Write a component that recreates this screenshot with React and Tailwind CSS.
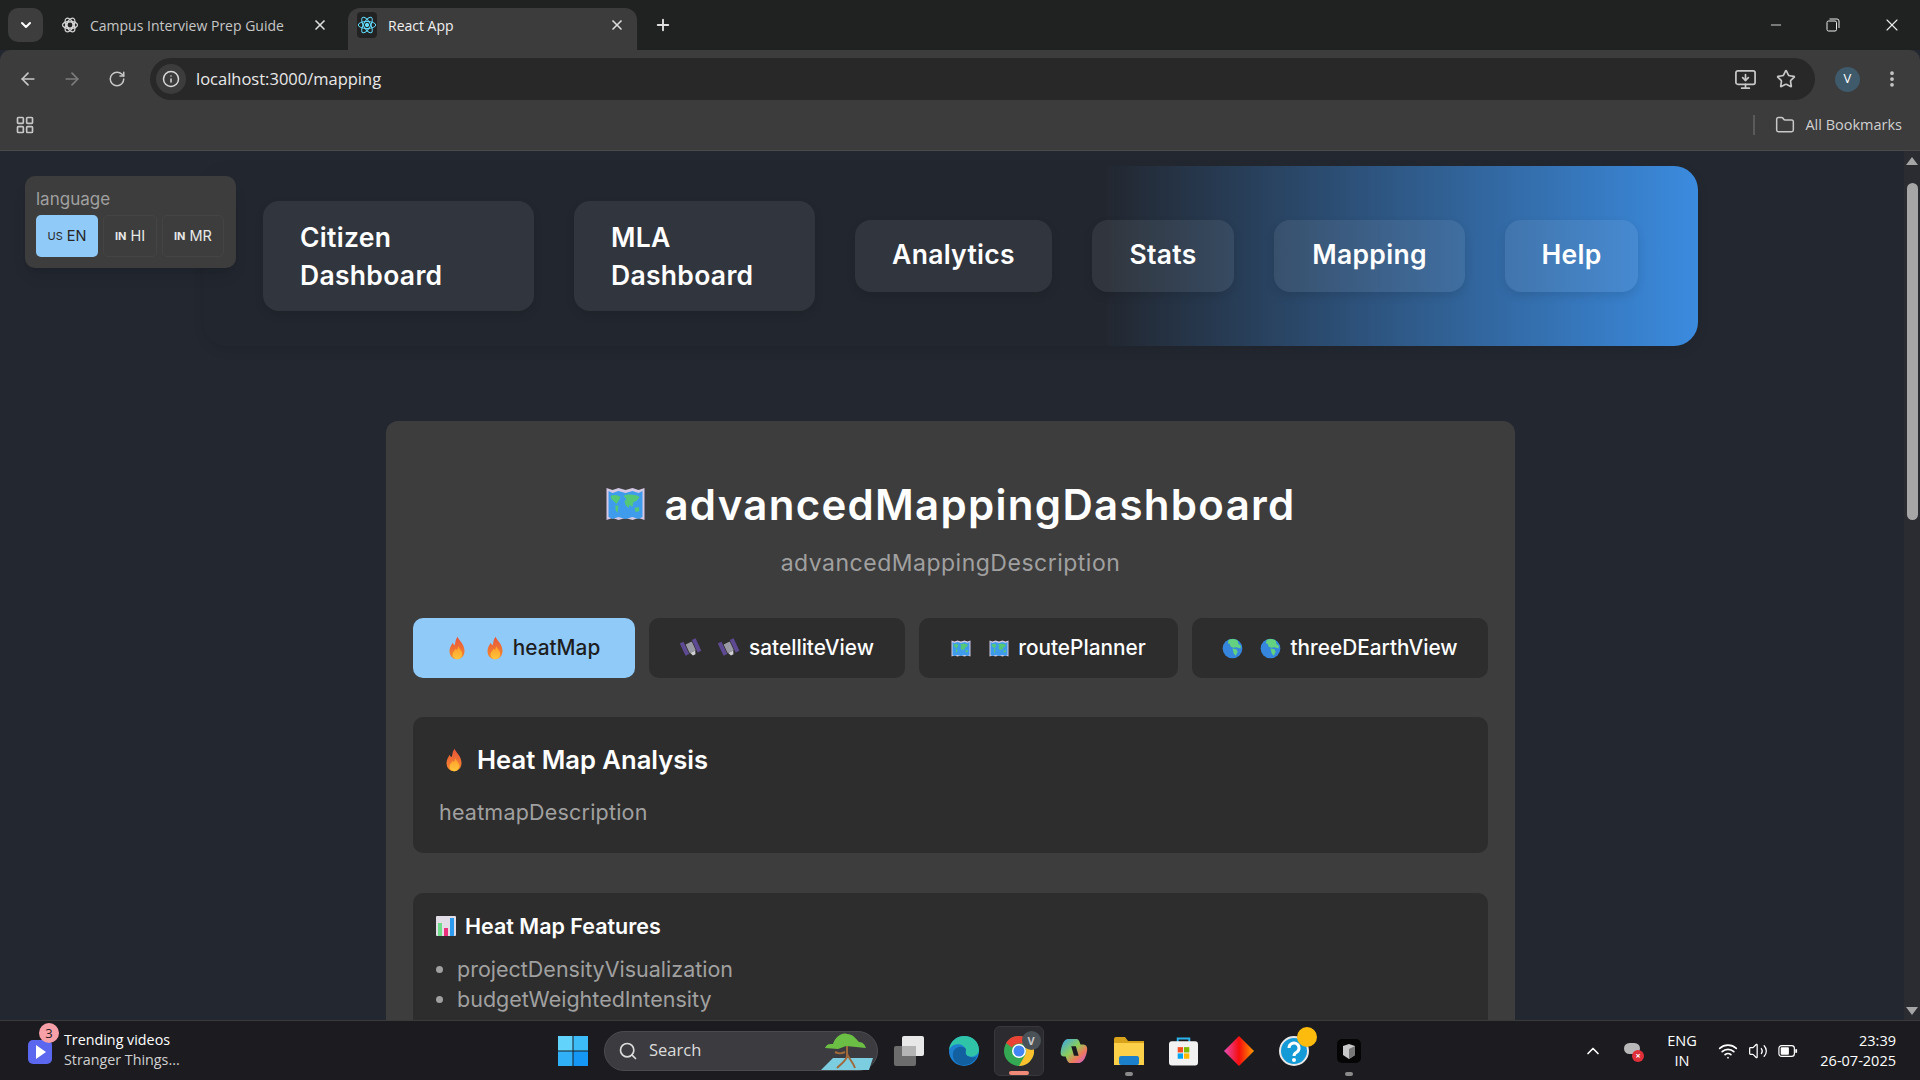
import React from 'react';
import { ArrowLeft, ArrowRight, ChevronDown, ChevronUp, EllipsisVertical, Folder, Info, LayoutGrid, MonitorDown, Minus, Plus, RotateCw, Search, Star, Volume2, Wifi, X } from 'lucide-react';

const poppins = "font-['Inter','Noto_Sans',sans-serif]";
const segoe = "font-['Open_Sans','Noto_Sans',sans-serif]";

const FireEmoji = ({ className }) => (
  <svg viewBox="0 0 24 32" className={className}>
    <defs>
      <linearGradient id="fireOuter" x1="0" y1="0" x2="0" y2="1">
        <stop offset="0" stopColor="#e8553a" />
        <stop offset="1" stopColor="#f58a2c" />
      </linearGradient>
      <linearGradient id="fireInner" x1="0" y1="0" x2="0" y2="1">
        <stop offset="0" stopColor="#ff9a2a" />
        <stop offset="1" stopColor="#ffc53a" />
      </linearGradient>
    </defs>
    <path d="M13 1c1 5 9 9 9 19 0 7-5 11-10 11S2 27 2 20c0-5 3-8 4-11 1 2 2 3 3 3 1-4 1-8 4-11z" fill="url(#fireOuter)" />
    <path d="M14 13c0 4 5 6 5 11 0 4-3 7-7 7s-6-3-6-6c0-4 3-5 4-8 1 1 2 1 2 2 1-2 1-4 2-6z" fill="url(#fireInner)" />
  </svg>
);

const MapEmoji = ({ className }) => (
  <svg viewBox="0 0 40 36" className={className}>
    <path d="M1 2l6 2 6-2 7 2 7-2 6 2 6-2v32l-6-2-6 2-7-2-7 2-6-2-6 2z" fill="#d5c8e4" />
    <path d="M3 5l4 2 6-2 7 2 7-2 6 2 4-2v26l-4 2-6-2-7 2-7-2-6 2-4-2z" fill="#3f9ced" />
    <path d="M5 10c3-2 8-1 10 1l-2 4-2 3-2-2-3-3zM10 19l3 1-1 7-2-3zM18 10c3-2 12-2 16 1l-3 4-3 1-1 5-3-2-1 3-3-3-1-4 2-2z" fill="#55c878" />
    <path d="M29 22l4-1 1 4-4 1z" fill="#55c878" />
  </svg>
);

const SatelliteEmoji = ({ className }) => (
  <svg viewBox="0 0 32 32" className={className}>
    <g transform="rotate(-25 16 16)">
      <rect x="4" y="3" width="6" height="20" fill="#5e4a92" />
      <rect x="22" y="6" width="6" height="20" fill="#5e4a92" />
      <rect x="11" y="8" width="10" height="14" rx="1" fill="#9a9aa4" />
      <path d="M12 22h8l-2 5h-4z" fill="#d0d0d6" />
    </g>
  </svg>
);

const GlobeEmoji = ({ className }) => (
  <svg viewBox="0 0 32 32" className={className}>
    <circle cx="16" cy="16" r="15" fill="#3586dc" />
    <path d="M10 3c4-2 10-2 14 1l1 5 4 3-1 4-6-2-5 1-4-2-1-4-3-1zM16 16l6 1 2 4-3 6-3-3-1-4z" fill="#63d17f" />
  </svg>
);

const ChartEmoji = ({ className }) => (
  <svg viewBox="0 0 20 20" className={className}>
    <rect width="20" height="20" rx="1" fill="#e3dde8" />
    <rect x="2" y="7" width="4" height="13" fill="#6fdc8c" />
    <rect x="8" y="12" width="4" height="8" fill="#ec2f7b" />
    <rect x="14" y="2" width="4" height="18" fill="#2d9bf0" />
  </svg>
);

const TabFavicon = () => (
  <svg viewBox="0 0 24 24" className="w-[18px] h-[18px]" fill="none" stroke="#d6d6d6" strokeWidth="1.6">
    <circle cx="12" cy="12" r="4" />
    <ellipse cx="12" cy="12" rx="10" ry="5" />
    <ellipse cx="12" cy="12" rx="10" ry="5" transform="rotate(60 12 12)" />
    <ellipse cx="12" cy="12" rx="10" ry="5" transform="rotate(120 12 12)" />
  </svg>
);

const ReactFavicon = () => (
  <div className="w-5 h-[26px] bg-[#222] rounded-sm flex items-center justify-center">
    <svg viewBox="0 0 24 24" className="w-5 h-5" fill="none" stroke="#61dafb" strokeWidth="1.2">
      <circle cx="12" cy="12" r="2" fill="#61dafb" />
      <ellipse cx="12" cy="12" rx="10.5" ry="4.2" />
      <ellipse cx="12" cy="12" rx="10.5" ry="4.2" transform="rotate(60 12 12)" />
      <ellipse cx="12" cy="12" rx="10.5" ry="4.2" transform="rotate(120 12 12)" />
    </svg>
  </div>
);

const BrowserChrome = () => (
  <div className={`${segoe} shrink-0`}>
    <div className="h-[50px] bg-[#202222] flex items-end pl-2 text-[14px]">
      <div className="w-[35px] h-[34px] mb-2 bg-[#3d3d3d] rounded-[10px] flex items-center justify-center">
        <ChevronDown className="w-4 h-4 text-white" strokeWidth={3} />
      </div>
      <div className="w-[305px] h-[42px] flex items-center pb-2 pl-[18px] pr-[20px] text-[#c6c6c6]">
        <TabFavicon />
        <span className="ml-[11px] flex-1 truncate">Campus Interview Prep Guide</span>
        <X className="w-4 h-4 text-[#dddddd]" strokeWidth={2.5} />
      </div>
      <div className="w-[289px] h-[42px] bg-[#3c3c3c] rounded-t-[12px] flex items-center pb-2 pl-[9px] pr-[12px] text-[#f0f0f0]">
        <ReactFavicon />
        <span className="ml-[11px] flex-1">React App</span>
        <X className="w-4 h-4 text-[#dddddd]" strokeWidth={2.5} />
      </div>
      <Plus className="w-[18px] h-[18px] text-[#e0e0e0] ml-[17px] mb-[16px]" strokeWidth={2.5} />
      <div className="ml-auto h-full flex items-center pr-[18px] text-[#ececec] gap-[42px]">
        <Minus className="w-[16px] h-[16px]" strokeWidth={1.3} />
        <svg viewBox="0 0 14 14" className="w-[14px] h-[14px]" fill="none" stroke="currentColor">
          <rect x="1" y="3" width="9.5" height="10" rx="1.5" />
          <path d="M3.5 1h7.5a2 2 0 0 1 2 2v7" />
        </svg>
        <X className="w-[20px] h-[20px]" strokeWidth={1.3} />
      </div>
    </div>
    <div className="h-[58px] bg-[#3c3c3c] rounded-t-[10px] flex items-center pl-[18px] text-[#c8c8c8]">
      <ArrowLeft className="w-5 h-5 shrink-0" strokeWidth={2} />
      <ArrowRight className="w-5 h-5 shrink-0 ml-[24px] text-[#7c7c7c]" strokeWidth={2} />
      <RotateCw className="w-[18px] h-[18px] shrink-0 ml-[26px]" strokeWidth={2} />
      <div className="ml-[24px] w-[1665px] shrink-0 h-[42px] bg-[#282828] rounded-full flex items-center pl-[6px] pr-[19px]">
        <div className="w-[30px] h-[30px] rounded-full bg-[#3c3c3c] flex items-center justify-center">
          <Info className="w-[18px] h-[18px] text-[#d8d8d8]" strokeWidth={2} />
        </div>
        <span className="ml-[10px] text-[16.5px] text-[#e8e8e8]">localhost:3000/mapping</span>
        <MonitorDown className="w-[23px] h-[23px] ml-auto" strokeWidth={1.8} />
        <Star className="w-[20px] h-[20px] ml-[19px]" strokeWidth={2} />
      </div>
      <div className="ml-[20px] w-[25px] h-[25px] shrink-0 rounded-full bg-[#3f5a6b] flex items-center justify-center text-[13px] text-white">V</div>
      <EllipsisVertical className="w-5 h-5 shrink-0 ml-[22px]" strokeWidth={2.5} />
    </div>
    <div className="h-[43px] bg-[#3c3c3c] border-b border-[#4a4a4a] flex items-center pb-2 pl-[15px] pr-[18px] text-[#c8c8c8]">
      <LayoutGrid className="w-5 h-5" strokeWidth={2} />
      <div className="ml-auto w-[2px] h-5 bg-[#5a5a5a]" />
      <Folder className="w-[20px] h-[20px] ml-[20px]" strokeWidth={1.8} />
      <span className="ml-[10px] text-[14.5px] text-[#d0d0d0]">All Bookmarks</span>
    </div>
  </div>
);

const LanguageSwitch = () => (
  <div className="absolute left-[25px] top-[25px] w-[211px] h-[92px] bg-[#3d3d3d] rounded-[10px] shadow-lg px-[11px] pt-[11px]">
    <div className="text-[17px] leading-[24px] text-[#a0a0a0]">language</div>
    <div className="flex gap-[5px] mt-[4px] text-[14.5px]">
      <div className="w-[62px] h-[42px] bg-[#90caf9] text-[#262626] rounded-[5px] flex items-center justify-center gap-1">
        <span className="text-[11px]">US</span>EN
      </div>
      <div className="w-[54px] h-[42px] text-[#e8e8e8] rounded-[5px] border border-[#444] flex items-center justify-center gap-1">
        <span className="text-[11px] font-bold">IN</span>HI
      </div>
      <div className="w-[62px] h-[42px] text-[#e8e8e8] rounded-[5px] border border-[#444] flex items-center justify-center gap-1">
        <span className="text-[11px] font-bold">IN</span>MR
      </div>
    </div>
  </div>
);

const navItems = [
  { label: 'Analytics', w: 'w-[197px]' },
  { label: 'Stats', w: 'w-[142px]' },
  { label: 'Mapping', w: 'w-[191px]' },
  { label: 'Help', w: 'w-[133px]' },
];

const NavBar = () => (
  <div className="ml-[204px] w-[1494px] h-[180px] rounded-[24px] bg-[linear-gradient(90deg,#22262e_0%,#22262e_60%,#3b8bdf_100%)] shadow-[0_4px_12px_rgba(0,0,0,0.1)] flex items-center gap-[40px] px-[59px] text-[26.5px] tracking-[0.3px] font-semibold text-white">
    <div className="w-[271px] h-[110px] rounded-[16px] bg-white/[0.07] shadow-[0_4px_10px_rgba(0,0,0,0.1)] flex items-center px-[37px] leading-[38px]">
      <span>Citizen<br />Dashboard</span>
    </div>
    <div className="w-[241px] h-[110px] rounded-[16px] bg-white/[0.07] shadow-[0_4px_10px_rgba(0,0,0,0.1)] flex items-center px-[37px] leading-[38px]">
      <span>MLA<br />Dashboard</span>
    </div>
    {navItems.map((item) => (
      <div key={item.label} className={`${item.w} h-[72px] pb-[2px] rounded-[16px] bg-white/[0.07] shadow-[0_4px_10px_rgba(0,0,0,0.1)] flex items-center justify-center`}>
        {item.label}
      </div>
    ))}
  </div>
);

const tabs = [
  { label: 'heatMap', Icon: FireEmoji, icon: 'w-[18px] h-[24px]', gap: 'gap-[20px]', w: 'w-[222px]', active: true },
  { label: 'satelliteView', Icon: SatelliteEmoji, icon: 'w-[22px] h-[22px]', gap: 'gap-[16px]', w: 'w-[256px]' },
  { label: 'routePlanner', Icon: MapEmoji, icon: 'w-[20px] h-[19px]', gap: 'gap-[18px]', w: 'w-[259px]' },
  { label: 'threeDEarthView', Icon: GlobeEmoji, icon: 'w-[21px] h-[21px]', gap: 'gap-[17px]', w: 'w-[296px]' },
];

const MainCard = () => (
  <div className="ml-[386px] w-[1129px] mt-[75px] bg-[#3d3d3d] rounded-t-[12px] px-[27px] pt-[53px] pb-10">
    <h1 className="flex items-center justify-center gap-[18px] h-[60px] text-[42px] font-semibold text-white tracking-[1.3px]">
      <MapEmoji className="w-[41px] h-[36px]" />
      advancedMappingDashboard
    </h1>
    <p className="mt-[12px] h-[34px] text-center text-[23px] tracking-[0.5px] leading-[34px] text-[#a0a0a0]">advancedMappingDescription</p>
    <div className="flex gap-[14px] mt-[38px]">
      {tabs.map(({ label, Icon, icon, gap, w, active }) => (
        <div
          key={label}
          className={`${w} h-[60px] rounded-[10px] flex items-center justify-center text-[20.8px] font-medium ${
            active ? 'bg-[#90caf9] text-[#1e1e1e]' : 'bg-[#2d2d2d] text-white'
          }`}
        >
          <span className={`flex items-center ${gap}`}>
            <Icon className={icon} />
            <span className="flex items-center gap-[9px]">
              <Icon className={icon} />
              {label}
            </span>
          </span>
        </div>
      ))}
    </div>
    <div className="mt-[39px] h-[136px] bg-[#2d2d2d] rounded-[10px] pl-[26px] pt-[27px]">
      <h2 className="flex items-center pl-[6px] gap-[14px] text-[25.6px] leading-[32px] font-semibold text-white">
        <FireEmoji className="w-[18px] h-[24px]" />
        Heat Map Analysis
      </h2>
      <p className="mt-[20px] text-[21.5px] tracking-[0.2px] leading-[32px] text-[#a0a0a0]">heatmapDescription</p>
    </div>
    <div className="mt-[40px] bg-[#2d2d2d] rounded-[10px] pl-[23px] pt-[20px] pb-10">
      <h3 className="flex items-center gap-[9px] text-[21.5px] leading-[26px] font-semibold text-white">
        <ChartEmoji className="w-[20px] h-[20px]" />
        Heat Map Features
      </h3>
      <ul className="mt-[15px] pl-[21px] list-disc text-[21.5px] leading-[30px] text-[#a0a0a0]">
        <li>projectDensityVisualization</li>
        <li>budgetWeightedIntensity</li>
      </ul>
    </div>
  </div>
);

const Scrollbar = () => (
  <div className="w-4 shrink-0 bg-[#2a2c31] flex flex-col items-center pt-[6px]">
    <div className="w-0 h-0 border-x-[6px] border-x-transparent border-b-[8px] border-b-[#a6a6a6]" />
    <div className="w-[11px] h-[337px] mt-[18px] rounded-full bg-[#a6a6a6]" />
    <div className="w-0 h-0 mt-auto mb-[5px] border-x-[6px] border-x-transparent border-t-[8px] border-t-[#a6a6a6]" />
  </div>
);

const TaskIcon = ({ children, active, dot }) => (
  <div className={`relative w-[50px] h-[50px] mx-[2.5px] rounded-[6px] flex items-center justify-center ${active ? 'bg-[#2b2b30] border border-[#37373c]' : ''}`}>
    {children}
    {dot && <div className={`absolute bottom-0 h-1 rounded-full ${active ? 'w-5 bg-[#f08a78]' : 'w-2 bg-[#8a8a8a]'}`} />}
  </div>
);

const Taskbar = () => (
  <div className={`${segoe} shrink-0 h-[60px] bg-[#1c1c20] border-t border-[#3a3a3a] flex items-center text-white`}>
    <div className="relative w-[554px] shrink-0 pl-[64px] pb-[2px] text-[14.3px] leading-[20px]">
      <svg viewBox="0 0 24 24" className="absolute left-[28px] top-[10px] w-[24px] h-[24px]">
        <rect x="0" y="0" width="24" height="24" rx="5" fill="#5a67ee" />
        <path d="M8 5l10 7-10 7z" fill="#fff" />
      </svg>
      <div className="absolute left-[39px] top-[-7px] w-5 h-5 rounded-full bg-[#f8a0a8] text-[#222] text-[13px] leading-5 text-center">3</div>
      <div>Trending videos</div>
      <div className="text-[#d0d0d0]">Stranger Things...</div>
    </div>
    <svg viewBox="0 0 30 30" className="w-[30px] h-[30px] ml-[4px]">
      <rect x="0" y="0" width="14.5" height="14.5" fill="#62d4fb" />
      <rect x="15.5" y="0" width="14.5" height="14.5" fill="#3cbdf8" />
      <rect x="0" y="15.5" width="14.5" height="14.5" fill="#2fb0f7" />
      <rect x="15.5" y="15.5" width="14.5" height="14.5" fill="#1597f5" />
    </svg>
    <div className="relative ml-[16px] w-[274px] h-[40px] rounded-full bg-[#3c3c40] border border-[#4c4c50] flex items-center pl-[13px] text-[16.5px] text-[#dcdcdc]">
      <Search className="w-[20px] h-[20px]" strokeWidth={2} />
      <span className="ml-[11px]">Search</span>
      <svg viewBox="0 0 56 40" className="absolute right-[4px] top-0 w-[56px] h-[40px]">
        <path d="M4 38l12-12h40l-4 12z" fill="#7ccde0" />
        <path d="M30 14v10c0 4-6 8-10 12M30 22c2 5 6 8 8 14M28 20c-4 2-6 2-10 0" stroke="#a06a3c" strokeWidth="2" fill="none" />
        <path d="M8 16c2-5 6-4 8-4 2-6 8-12 14-10 6 0 8 4 12 8 4 0 6 3 7 6l-10-1-10-1-8 3z" fill="#6cbf45" />
      </svg>
    </div>
    <div className="ml-[3px] flex items-center">
      <TaskIcon>
        <svg viewBox="0 0 30 30" className="w-[30px] h-[30px]">
          <rect x="0" y="10" width="22" height="20" rx="2" fill="#6c6c6c" />
          <rect x="8" y="0" width="22" height="20" rx="2" fill="#e8e8e8" />
          <rect x="8" y="10" width="14" height="10" fill="#b4b4b4" />
        </svg>
      </TaskIcon>
      <TaskIcon>
        <svg viewBox="0 0 30 30" className="w-[30px] h-[30px]">
          <circle cx="15" cy="15" r="15" fill="#1c7fd0" />
          <path d="M0 14C1 5 8 0 15 0c9 0 15 6 15 14 0 5-6 8-11 6-3-1-3-4-2-6C15 7 4 6 0 14z" fill="#2fc4a8" />
          <path d="M17 14c-1 3 0 6 4 7 3 1 6 0 7-1-3 7-10 10-16 9C6 27 3 22 4 17c1-5 6-7 9-6 2 0 4 1 4 3z" fill="#12609f" />
        </svg>
      </TaskIcon>
      <TaskIcon active dot>
        <svg viewBox="0 0 30 30" className="w-[30px] h-[30px]">
          <circle cx="15" cy="15" r="15" fill="#35a853" />
          <path d="M15 0a15 15 0 0 1 13 7.5H15a8 8 0 0 0-7 4L2 7A15 15 0 0 1 15 0z" fill="#ea4335" />
          <path d="M28 7.5A15 15 0 0 1 15 30l6.5-11.5A8 8 0 0 0 21 11z" fill="#fbc02d" />
          <circle cx="15" cy="15" r="7" fill="#fff" />
          <circle cx="15" cy="15" r="5.5" fill="#4285f4" />
        </svg>
        <div className="absolute right-[2px] top-[4px] w-[19px] h-[19px] rounded-full bg-[#4a5258] text-[#c8c8c8] text-[11px] leading-[19px] text-center font-bold">V</div>
      </TaskIcon>
      <TaskIcon>
        <svg viewBox="0 0 30 28" className="w-[28px] h-[26px]">
          <defs>
            <linearGradient id="copilot" x1="0" y1="0" x2="1" y2="1">
              <stop offset="0" stopColor="#35a6f1" />
              <stop offset="0.45" stopColor="#8ccf5a" />
              <stop offset="0.7" stopColor="#f07a5a" />
              <stop offset="1" stopColor="#c45ae8" />
            </linearGradient>
          </defs>
          <path d="M8 1h10c2 0 3 3 4 6h3c3 0 5 3 4 7-1 6-3 11-8 13H10c-2-1-3-4-4-7H4c-3 0-4-3-3-7C2 7 4 2 8 1z" fill="url(#copilot)" />
          <path d="M12 9h5l3 10h-5z" fill="#1c1c20" />
        </svg>
      </TaskIcon>
      <TaskIcon dot>
        <svg viewBox="0 0 30 28" className="w-[30px] h-[28px]">
          <path d="M0 2a2 2 0 0 1 2-2h9l3 4h16v24H0z" fill="#d9a21b" />
          <rect x="0" y="6" width="30" height="22" fill="#fdd04a" />
          <rect x="5" y="19" width="20" height="9" rx="2" fill="#1b7fc9" />
        </svg>
      </TaskIcon>
      <TaskIcon>
        <svg viewBox="0 0 30 30" className="w-[29px] h-[30px]">
          <path d="M9 6V2h12v4" fill="none" stroke="#2cb3ec" strokeWidth="2" />
          <rect x="0" y="5" width="30" height="25" rx="3" fill="#f2f2f2" />
          <rect x="9" y="11" width="5.5" height="5.5" fill="#f25022" />
          <rect x="15.5" y="11" width="5.5" height="5.5" fill="#7fba00" />
          <rect x="9" y="17.5" width="5.5" height="5.5" fill="#00a4ef" />
          <rect x="15.5" y="17.5" width="5.5" height="5.5" fill="#ffb900" />
        </svg>
      </TaskIcon>
      <TaskIcon>
        <svg viewBox="0 0 30 30" className="w-[30px] h-[30px]">
          <defs>
            <linearGradient id="diamond" x1="0" y1="0" x2="1" y2="0">
              <stop offset="0" stopColor="#e84db8" />
              <stop offset="0.5" stopColor="#f60d0d" />
              <stop offset="1" stopColor="#ff9a00" />
            </linearGradient>
          </defs>
          <path d="M15 0l15 15-15 15L0 15z" fill="url(#diamond)" />
        </svg>
      </TaskIcon>
      <TaskIcon>
        <svg viewBox="0 0 30 30" className="w-[30px] h-[30px]">
          <circle cx="15" cy="15" r="14" fill="#149bd7" stroke="#e8e8e8" strokeWidth="2" />
          <path d="M10 12a5 5 0 1 1 8 4c-2 1-3 2-3 4" fill="none" stroke="#fff" strokeWidth="3" />
          <circle cx="15" cy="24" r="2" fill="#fff" />
        </svg>
        <div className="absolute right-[2px] top-[1px] w-5 h-5 rounded-full bg-[#fdbb0e]" />
      </TaskIcon>
      <TaskIcon dot>
        <svg viewBox="0 0 24 24" className="w-[24px] h-[24px]">
          <rect width="24" height="24" rx="5" fill="#050505" />
          <path d="M6 7l6-2 6 2v9l-6 4-6-4z" fill="#c8c8c8" />
          <path d="M12 10l6-3v9l-6 4z" fill="#777" />
        </svg>
      </TaskIcon>
    </div>
    <ChevronUp className="w-5 h-5 ml-[207px]" strokeWidth={2} />
    <div className="relative ml-[21px] w-5 h-5">
      <div className="absolute left-0 top-[2px] w-[16px] h-[11px] rounded-full bg-[#b8b8b8]" />
      <div className="absolute right-0 bottom-[-1px] w-[12px] h-[12px] rounded-full bg-[#e0303a] text-[9px] leading-[12px] text-center font-bold">×</div>
    </div>
    <div className="ml-[20px] w-[36px] text-center text-[14.5px] leading-[20px]">ENG<br />IN</div>
    <Wifi className="w-5 h-5 ml-[18px]" strokeWidth={2} />
    <Volume2 className="w-5 h-5 ml-[10px]" strokeWidth={1.5} />
    <svg viewBox="0 0 22 14" className="w-[20px] h-[14px] ml-[10px]" fill="none">
      <rect x="1" y="1" width="17" height="12" rx="3" stroke="#fff" strokeWidth="1.3" />
      <rect x="3" y="3" width="9" height="8" rx="1" fill="#fff" />
      <rect x="19" y="5" width="2" height="4" fill="#fff" />
    </svg>
    <div className="ml-auto pr-[24px] text-right text-[14.5px] leading-[20px]">23:39<br />26-07-2025</div>
  </div>
);

export default function App() {
  return (
    <div className="h-screen flex flex-col overflow-hidden bg-[#232730]">
      <BrowserChrome />
      <div className={`${poppins} flex-1 min-h-0 flex`}>
        <div className="relative flex-1 overflow-hidden pt-[15px]">
          <LanguageSwitch />
          <NavBar />
          <MainCard />
        </div>
        <Scrollbar />
      </div>
      <Taskbar />
    </div>
  );
}
